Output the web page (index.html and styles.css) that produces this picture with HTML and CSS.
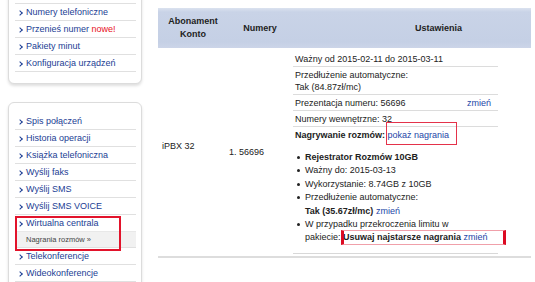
FILE: index.html
```html
<!DOCTYPE html>
<html>
<head>
<meta charset="utf-8">
<link rel="stylesheet" href="styles.css">
</head>
<body>
<div class="page">
  <aside class="sidebar">
    <div class="panel panel-top">
      <ul class="menu">
        <li class="item">Numery telefoniczne</li>
        <li class="item">Przenieś numer <span class="new">nowe!</span></li>
        <li class="item">Pakiety minut</li>
        <li class="item">Konfiguracja urządzeń</li>
      </ul>
    </div>
    <div class="panel panel-bottom">
      <ul class="menu">
        <li class="item">Spis połączeń</li>
        <li class="item">Historia operacji</li>
        <li class="item">Książka telefoniczna</li>
        <li class="item">Wyślij faks</li>
        <li class="item">Wyślij SMS</li>
        <li class="item">Wyślij SMS VOICE</li>
        <li class="group-marked">
          <div class="item item-plain">Wirtualna centrala</div>
          <div class="subitem">Nagrania rozmów »</div>
        </li>
        <li class="item">Telekonferencje</li>
        <li class="item">Wideokonferencje</li>
      </ul>
    </div>
  </aside>

  <main class="main">
    <div class="grid">
      <div class="th th-1">Abonament<br>Konto</div>
      <div class="th th-2">Numery</div>
      <div class="th th-3">Ustawienia</div>

      <div class="td td-1"><span class="plan">iPBX 32</span></div>
      <div class="td td-2">1. 56696</div>
      <div class="td td-3">
        <div class="settings">
          <div class="srow">Ważny od 2015-02-11 do 2015-03-11</div>
          <div class="srow">Przedłużenie automatyczne:<br>Tak (84.87zł/mc)</div>
          <div class="srow srow-split"><span>Prezentacja numeru: 56696</span><a class="link">zmień</a></div>
          <div class="srow">Numery wewnętrzne: 32</div>
          <div class="srow srow-last"><b>Nagrywanie rozmów:</b> <a class="link marked-a">pokaż nagrania</a></div>
          <ul class="bullets">
            <li><b>Rejestrator Rozmów 10GB</b></li>
            <li>Ważny do: 2015-03-13</li>
            <li>Wykorzystanie: 8.74GB z 10GB</li>
            <li>Przedłużenie automatyczne:<br><b>Tak (35.67zł/mc)</b> <a class="link">zmień</a></li>
            <li>W przypadku przekroczenia limitu w<br>pakiecie: <span class="marked-b"><b>Usuwaj najstarsze nagrania</b> <a class="link">zmień</a></span></li>
          </ul>
        </div>
      </div>
    </div>
  </main>
</div>
</body>
</html>
```

FILE: styles.css
```css
* { box-sizing: border-box; }

html, body {
  margin: 0;
  padding: 0;
  background: #fff;
}

body {
  font-family: "Liberation Sans", Arial, sans-serif;
  font-size: 9px;
  color: #222;
  overflow: hidden;
  width: 535px;
  height: 282px;
}

.page {
  display: flex;
  align-items: flex-start;
}

/* ---------- sidebar ---------- */
.sidebar {
  width: 134px;
  margin-left: 8px;
  display: flex;
  flex-direction: column;
  gap: 18px;
}

.panel {
  border: 1px solid #dcdcdc;
  border-radius: 6px;
  background: #fff;
  box-shadow: 0 2px 3px rgba(0, 0, 0, 0.13);
  padding: 0 5px 0 6px;
}

.panel-top {
  margin-top: -10px;
  padding-top: 12px;
  padding-bottom: 11px;
}

.panel-bottom {
  padding-top: 10px;
  padding-bottom: 6px;
}

.menu {
  list-style: none;
  margin: 0;
  padding: 0;
}

.panel-top .menu {
  border-top: 1px solid #e0e0e0;
}

.item {
  height: 17px;
  line-height: 16px;
  border-bottom: 1px solid #e0e0e0;
  color: #1b3d94;
  padding-left: 11px;
  position: relative;
  white-space: nowrap;
}

.item::before {
  content: "";
  position: absolute;
  left: 3px;
  top: 7px;
  width: 3px;
  height: 3px;
  border-right: 1.3px solid #1b3d94;
  border-bottom: 1.3px solid #1b3d94;
  transform: rotate(-45deg);
}

.item-plain {
  border-bottom: 1px solid #e8e8e8;
  height: 17px;
}

.new {
  color: #e8101c;
}

.group-marked {
  position: relative;
}

.group-marked::after {
  content: "";
  position: absolute;
  left: 0;
  top: 1px;
  width: 102px;
  height: 31px;
  border: 2px solid #e2132b;
}

.subitem {
  height: 16px;
  line-height: 15px;
  background: #f1f1f1;
  color: #444;
  font-size: 7.5px;
  padding-left: 11px;
  border-bottom: 1px solid #e0e0e0;
}

/* ---------- main table ---------- */
.main {
  margin-left: 16px;
  margin-top: 8px;
  width: 373px;
}

.grid {
  display: grid;
  grid-template-columns: 70px 64px 239px;
}

.th {
  height: 40px;
  background: linear-gradient(#dbe2ef 0, #c9d3e7 4px, #c5d0e5 85%, #ccd5e8 100%);
  font-weight: bold;
  color: #222;
  display: flex;
  align-items: center;
  justify-content: center;
  text-align: center;
  line-height: 13px;
}

.th-3 {
  padding-left: 54px;
}

.td {
  height: 210px;
  border-bottom: 2px solid #dddddd;
  display: flex;
  align-items: center;
}

.td-1 {
  padding-left: 4px;
  padding-bottom: 12px;
}

.td-2 {
  padding-left: 1px;
}

.td-3 {
  align-items: flex-start;
  padding-top: 3px;
  padding-left: 1px;
}

.settings {
  width: 205px;
  border-bottom: 1px solid #d8d8d8;
  padding-bottom: 8px;
}

.srow {
  line-height: 12px;
  padding: 2px 2px 1px 2px;
  border-bottom: 1px solid #dcdcdc;
}

.srow-split {
  display: flex;
  justify-content: space-between;
  padding-right: 7px;
}

.srow-last {
  border-bottom: none;
}

.link {
  color: #2446a8;
}

.marked-a {
  position: relative;
}

.marked-a::after {
  content: "";
  position: absolute;
  left: -2px;
  right: -8px;
  top: -8px;
  bottom: -5px;
  border: 1px solid #e4324a;
}

.bullets {
  margin: 9px 0 0 0;
  padding: 0 0 0 12px;
  line-height: 13.4px;
}

.bullets li {
  list-style: none;
  position: relative;
}

.bullets li::before {
  content: "";
  position: absolute;
  left: -8px;
  top: 5px;
  width: 3px;
  height: 3px;
  border-radius: 50%;
  background: #222;
}

.marked-b {
  position: relative;
}

.marked-b::after {
  content: "";
  position: absolute;
  left: -2px;
  right: -18px;
  top: -2px;
  bottom: -3px;
  border-left: 3px solid #dc0a22;
  border-right: 3px solid #dc0a22;
  border-top: 1px solid #f0a0aa;
  border-bottom: 1px solid #f0a0aa;
}
```
